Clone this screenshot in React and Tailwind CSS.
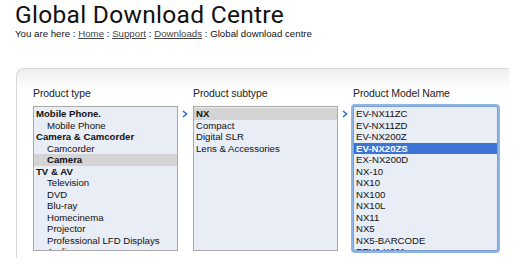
import React from 'react';

const types = [
  { label: 'Mobile Phone.', group: true },
  { label: 'Mobile Phone' },
  { label: 'Camera & Camcorder', group: true },
  { label: 'Camcorder' },
  { label: 'Camera', selected: true },
  { label: 'TV & AV', group: true },
  { label: 'Television' },
  { label: 'DVD' },
  { label: 'Blu-ray' },
  { label: 'Homecinema' },
  { label: 'Projector' },
  { label: 'Professional LFD Displays' },
  { label: 'Audio' },
];

const subtypes = [
  { label: 'NX', selected: true },
  { label: 'Compact' },
  { label: 'Digital SLR' },
  { label: 'Lens & Accessories' },
];

const models = [
  'EV-NX11ZC',
  'EV-NX11ZD',
  'EV-NX200Z',
  'EV-NX20ZS',
  'EX-NX200D',
  'NX-10',
  'NX10',
  'NX100',
  'NX10L',
  'NX11',
  'NX5',
  'NX5-BARCODE',
  'RTX2 K601',
];

function Arrow() {
  return (
    <div className="w-[15px] pt-[24px] pl-[4px]">
      <svg width="6" height="8" viewBox="0 0 6 8">
        <polyline points="1,1 4.5,4 1,7" fill="none" stroke="#2f6fd0" strokeWidth="1.6" />
      </svg>
    </div>
  );
}

function Column({ title, children, focused }) {
  return (
    <div className="w-[145px]">
      <div className="text-[10.5px] leading-[14px] text-[#222] tracking-[-0.1px] mb-[6px]">{title}</div>
      <div
        className={
          focused
            ? 'h-[145px] overflow-hidden bg-[#e8edf6] border border-[#7d9fd0] rounded-[2px] shadow-[0_0_0_2px_#8db5ea] pt-[1px]'
            : 'h-[145px] overflow-hidden bg-[#e8edf6] border border-[#a9a9a9] pt-[1px]'
        }
      >
        {children}
      </div>
    </div>
  );
}

function Row({ children, className }) {
  return <div className={`h-[11.5px] leading-[11.5px] text-[9.6px] whitespace-nowrap ${className}`}>{children}</div>;
}

export default function App() {
  return (
    <div className="w-[520px] h-[276px] overflow-hidden bg-white text-[#111] font-['Liberation_Sans',Arial,sans-serif]">
      <div className="pl-[15px] pt-[1px]">
        <h1 className="font-['Roboto',sans-serif] text-[24.5px] leading-[27px] font-normal text-[#111] tracking-[0.3px]">
          Global Download Centre
        </h1>
        <p className="text-[9.7px] leading-[12px] text-[#111]">
          You are here : <a className="underline text-[#444]">Home</a> : <a className="underline text-[#444]">Support</a> :{' '}
          <a className="underline text-[#444]">Downloads</a> : Global download centre
        </p>
      </div>

      <div className="ml-[16px] mt-[28px] w-[493px] h-[190px] border-t border-l border-[#d9d9d9] rounded-tl-[8px] bg-gradient-to-b from-[#efefef] to-white to-[22px] pt-[17px] pl-[16px]">
        <div className="flex">
          <Column title="Product type">
            {types.map((t) => (
              <Row
                key={t.label}
                className={`${t.group ? 'font-bold pl-[2px]' : 'pl-[13px]'} ${t.selected ? 'bg-[#d4d4d4] font-bold' : ''}`}
              >
                {t.label}
              </Row>
            ))}
          </Column>
          <Arrow />
          <Column title="Product subtype">
            {subtypes.map((t) => (
              <Row key={t.label} className={`pl-[2px] ${t.selected ? 'bg-[#d4d4d4] font-bold' : ''}`}>
                {t.label}
              </Row>
            ))}
          </Column>
          <Arrow />
          <Column title="Product Model Name" focused>
            {models.map((m) => (
              <Row
                key={m}
                className={m === 'EV-NX20ZS' ? 'pl-[2px] bg-[#3b74d5] text-white font-bold' : 'pl-[2px]'}
              >
                {m}
              </Row>
            ))}
          </Column>
        </div>
      </div>
    </div>
  );
}
